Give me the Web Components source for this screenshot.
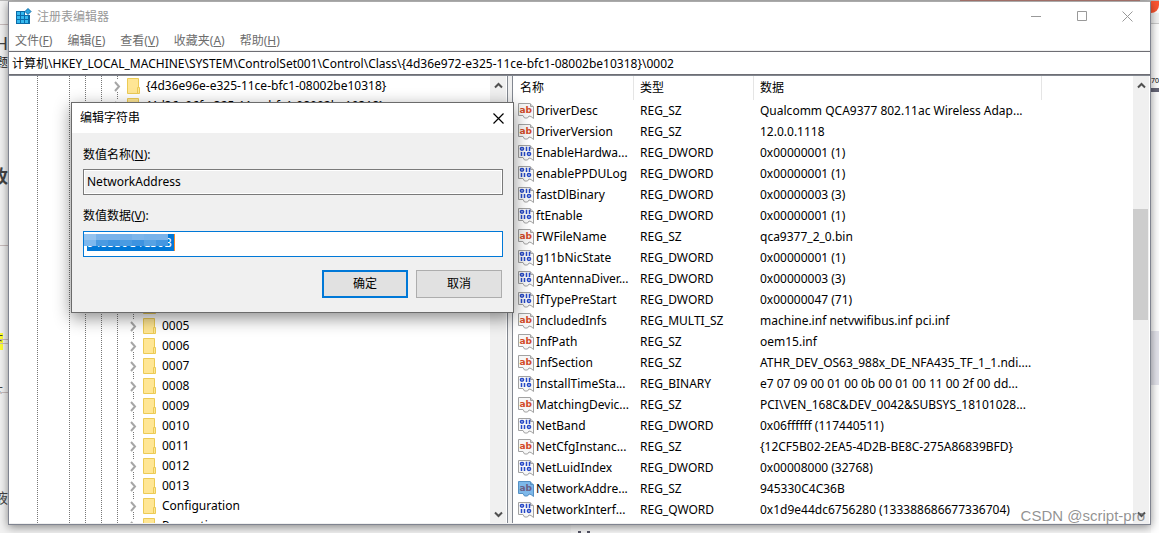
<!DOCTYPE html>
<html lang="zh-CN">
<head>
<meta charset="utf-8">
<title>注册表编辑器</title>
<style>
  body { margin: 0; font: 12px/20px "Noto Sans", "Noto Sans CJK SC", sans-serif; color: #000; }
</style>
</head>
<body>
<reg-desktop>
  <desk-backdrop slot="backdrop"></desk-backdrop>
  <reg-window caption="注册表编辑器">
    <menu-strip slot="menu"></menu-strip>
    <address-bar slot="address" path="计算机\HKEY_LOCAL_MACHINE\SYSTEM\ControlSet001\Control\Class\{4d36e972-e325-11ce-bfc1-08002be10318}\0002"></address-bar>
    <key-tree slot="tree"></key-tree>
    <value-list slot="values"></value-list>
  </reg-window>
  <string-dialog slot="dialog" caption="编辑字符串"></string-dialog>
  <span slot="mark">CSDN @script-pro</span>
</reg-desktop>

<script>
class Base extends HTMLElement {
  render(css, html) {
    this.attachShadow({ mode: "open" }).innerHTML =
      `<style>*{box-sizing:border-box}:host{box-sizing:border-box}button{font:inherit;color:inherit;padding:0;border:0;background:none}${css}</style>${html}`;
  }
}

customElements.define("reg-desktop", class extends Base {
  connectedCallback() {
    this.render(`
      :host { display: flex; flex-direction: column; position: relative; height: 100vh; overflow: hidden; background: #f2f2f2; }
      ::slotted(reg-window) { flex: 1; min-height: 0; margin: 1px 8px 8px; }
      ::slotted(string-dialog) { position: absolute; left: 71px; top: 102px; }
      ::slotted([slot=mark]) { position: absolute; right: 14px; bottom: 7px; font: 15px/20px "Liberation Sans", sans-serif; color: rgba(110,110,110,.75); }`,
      `<slot name="backdrop"></slot><slot></slot><slot name="dialog"></slot><slot name="mark"></slot>`);
  }
});

customElements.define("desk-backdrop", class extends Base {
  connectedCallback() {
    this.render(`
      :host { display: block; position: absolute; inset: 0; overflow: hidden; }
      :host > * { position: absolute; }
      .top { left: 0; right: 0; top: 0; height: 1px; background: linear-gradient(90deg,#bbb 0 960px,#b98078 960px 1140px,#bbb 1140px); }
      .left { left: 0; top: 0; bottom: 0; width: 8px; overflow: hidden; color: #444; }
      .left * { position: absolute; right: 0; white-space: nowrap; }
      .left i { left: 0; height: 1px; background: #c8bcbc; }
      .left .hot { left: 0; width: 3px; height: 17px; top: 333px; background: #ff3; }
      .right { right: 0; top: 0; bottom: 0; width: 8px; background: #fff; overflow: hidden; }
      .right * { position: absolute; left: 0; right: 0; }
      .bottom { left: 571px; right: 0; bottom: 0; height: 8px; background: #f8f8f8; }
      .dots { left: 578px; bottom: 0; width: 12px; height: 2px; background: linear-gradient(90deg,#556 3px,transparent 3px 9px,#556 9px); }`,
      `<div class="bottom"></div><div class="dots"></div>
       <div class="left">
         <span style="top:33px;font-size:18px">H</span>
         <span style="top:53px;color:#222">标题</span>
         <span style="top:166px;font-size:18px;font-weight:700">改</span>
         <span style="top:488px;font-size:14px">液</span>
         <b class="hot"></b>
         <span style="top:331px;right:5px">下</span><span style="top:383px;right:5px">下</span>
         <i style="top:24px"></i><i style="top:245px"></i><i style="top:339px"></i><i style="top:343px"></i><i style="top:392px"></i>
       </div>
       <div class="right">
         <b style="top:0;height:13px;background:#fc5531;border-radius:0 0 8px 0"></b>
         <b style="top:13px;height:11px;background:#f4f4f4;border-bottom:1px solid #ccc"></b>
         <b style="top:77px;height:6px;font:7px/7px 'Noto Sans'">704</b>
         <b style="top:88px;height:4px;background:#667"></b>
         <b style="top:331px;height:54px;background:#e4e4ec"></b>
       </div><div class="top"></div>`);
  }
});

customElements.define("reg-window", class extends Base {
  connectedCallback() {
    this.render(`
      :host { display: flex; flex-direction: column; position: relative; background: #f0f0f0; border: 1px solid #808490; border-top-color: #aaa; box-shadow: 0 2px 9px rgba(0,0,0,.45); }
      header { display: flex; align-items: center; height: 29px; padding-left: 6px; background: #fff; color: #999; flex: none; }
      h1 { margin: 0 auto 0 5px; font: inherit; }
      header button { width: 46px; height: 28px; display: grid; place-items: center; }
      header svg { display: block; }
      .panes { flex: 1; min-height: 0; display: grid; grid-template: minmax(0, 1fr) / 499px 1fr; column-gap: 4px; padding-bottom: 1px; border-top: 1px solid #828790; }
      ::slotted([slot=tree]), ::slotted([slot=values]) { min-height: 0; }`,
      `<header>
        <svg width="17" height="17" viewBox="0 0 17 17" aria-hidden="true">
          <path d="M1 3h9v4h5v9H1z" fill="#0a6ba8"/>
          <path d="M2 4h3v3H2zM6 4h3v3H6zM2 8h3v3H2zM6 8h3v3H6zM10 8h3v3h-3zM2 12h3v3H2zM6 12h3v3H6zM10 12h3v3h-3z" fill="#35b8ee"/>
          <path d="M13 .5 16 3.500 13 6.500 10 3.500z" fill="#2aa5e0" stroke="#0a6ba8"/>
        </svg>
        <h1>${this.getAttribute("caption")}</h1>
        <button aria-label="最小化"><svg width="11" height="11"><path d="M1 5.500h10" stroke="#999"/></svg></button>
        <button aria-label="最大化"><svg width="11" height="11"><path d="M1.500.5h9v9h-9z" fill="none" stroke="#999"/></svg></button>
        <button aria-label="关闭"><svg width="11" height="11"><path d="M.5.5l10 10M10.500.5l-10 10" stroke="#999"/></svg></button>
      </header>
      <slot name="menu"></slot><slot name="address"></slot>
      <div class="panes"><slot name="tree"></slot><slot name="values"></slot></div>`);
  }
});

customElements.define("menu-strip", class extends Base {
  connectedCallback() {
    const items = [["文件", "F"], ["编辑", "E"], ["查看", "V"], ["收藏夹", "A"], ["帮助", "H"]];
    this.render(`
      :host { display: flex; gap: 15px; height: 19px; padding-left: 6px; background: #fff; color: #6d6d6d; flex: none; }
      button { line-height: 19px; }`,
      items.map(([t, k]) => `<button>${t}(<u>${k}</u>)</button>`).join(""));
  }
});

customElements.define("address-bar", class extends Base {
  connectedCallback() {
    this.render(`
      :host { display: block; height: 24px; margin-top: 1px; background: #fff; border: solid #6e6e74; border-width: 1px 0; flex: none; }
      input { display: block; width: 100%; height: 22px; border: 0; padding: 0 3px; font: inherit; background: none; outline: 0; }`,
      `<input aria-label="地址">`);
    this.shadowRoot.querySelector("input").value = this.getAttribute("path");
  }
});

customElements.define("scroll-rail", class extends Base {
  connectedCallback() {
    const arrow = d => `<svg width="9" height="7" viewBox="0 0 9 7"><path d="${d}" fill="none" stroke="#505050" stroke-width="2"/></svg>`;
    this.render(`
      :host { display: flex; flex-direction: column; width: 16px; background: #f0f0f0; }
      button { height: 18px; display: grid; place-items: center; flex: none; }
      .track { flex: 1; position: relative; }
      .track i { position: absolute; left: 0; right: 1px; top: 28%; height: var(--thumb, 27%); background: #cdcdcd; }`,
      `<button aria-label="向上">${arrow("M1 5.500l3.500-3.500L8 5.500")}</button><div class="track"><i></i></div><button aria-label="向下">${arrow("M1 1.500l3.500 3.500L8 1.500")}</button>`);
  }
});

customElements.define("tree-item", class extends Base {
  connectedCallback() {
    this.render(`
      :host { display: flex; align-items: center; height: 20px; padding-left: 100px; }
      :host([level="2"]) { padding-left: 116px; }
      .twist { width: 16px; align-self: stretch; display: flex; align-items: center;
        background: repeating-linear-gradient(#777 0 1px,transparent 1px 2px) 8px 0/1px 100% no-repeat; }
      .twist svg { display: block; width: 16px; height: 12px; background: #fff; }
      .folder { margin: 0 6px 0 2px; flex: none; }
      span { white-space: nowrap; }`,
      `<div class="twist"><svg viewBox="0 0 16 12"><path d="M6 2l4 4.500L6 11" fill="none" stroke="#a6a6a6" stroke-width="2"/></svg></div>
       <svg class="folder" width="13" height="16" viewBox="0 0 13 16" aria-hidden="true">
         <path d="M.5.5h11V15.500H.5z" fill="#ffe694" stroke="#eccb55"/><path d="M10.500 9.500h2v6h-2z" fill="#ffe694" stroke="#eccb55"/></svg>
       <span><slot></slot></span>`);
  }
});

customElements.define("key-tree", class extends Base {
  connectedCallback() {
    const subs = ["0005", "0006", "0007", "0008", "0009", "0010", "0011", "0012", "0013", "Configuration", "Properties"];
    const line = x => `repeating-linear-gradient(#777 0 1px,transparent 1px 2px) ${x}px 0/1px 100% no-repeat`;
    this.render(`
      :host { display: flex; background: #fff; border-right: 1px solid #828790; overflow: hidden; --thumb: 20%; }
      .keys { flex: 1; min-width: 0; overflow: hidden; background: ${[28, 60, 76, 92].map(line).join(",")}; }
      .sub { background: ${line(108)}; }
      .covered { height: 180px; }
      scroll-rail { margin-right: 1px; }`,
      `<div class="keys" role="tree">
         <tree-item>{4d36e96e-e325-11ce-bfc1-08002be10318}</tree-item>
         <tree-item>{4d36e96f-e325-11ce-bfc1-08002be10318}</tree-item>
         <div class="sub"><div class="covered"></div><tree-item level="2">0004</tree-item>
         ${subs.map(s => `<tree-item level="2">${s}</tree-item>`).join("")}</div>
       </div><scroll-rail></scroll-rail>`);
  }
});

customElements.define("value-icon", class extends Base {
  connectedCallback() {
    const on = this.hasAttribute("selected");
    const edge = on ? "#5590c4" : "#a2a2a2";
    const glyph = this.getAttribute("kind") === "sz"
      ? `<text x="1.500" y="10" font-family="DejaVu Sans" font-weight="700" font-size="9" fill="${on ? "#6b5f86" : "#d24a28"}">ab</text>`
      : `<g fill="none" stroke="#2448c8" stroke-width="1.500"><ellipse cx="4" cy="3.800" rx="1.600" ry="1.400"/><path d="M8.500 1.700v4.200M11.500 1.700v4.200M3.500 6.900v4.200M6.500 6.900v4.200"/><ellipse cx="11" cy="9" rx="1.600" ry="1.400"/></g>`;
    this.render(`:host { display: block; } svg { display: block; }`,
      `<svg width="16" height="16" viewBox="0 0 16 16" aria-hidden="true"><path d="M.5.5H12L15.500 4V15.500L13 13.500 11 13 9.500 15H6.500L5 12.500H.5z" fill="${on ? "#7db8ea" : "#f7f7f7"}" stroke="${edge}"/><path d="M12.500 .5V3.500h3" fill="none" stroke="${edge}"/>${glyph}</svg>`);
  }
});

customElements.define("value-list", class extends Base {
  connectedCallback() {
    const rows = [
      ["DriverDesc", "REG_SZ", "Qualcomm QCA9377 802.11ac Wireless Adap..."],
      ["DriverVersion", "REG_SZ", "12.0.0.1118"],
      ["EnableHardwa...", "REG_DWORD", "0x00000001 (1)"],
      ["enablePPDULog", "REG_DWORD", "0x00000001 (1)"],
      ["fastDlBinary", "REG_DWORD", "0x00000003 (3)"],
      ["ftEnable", "REG_DWORD", "0x00000001 (1)"],
      ["FWFileName", "REG_SZ", "qca9377_2_0.bin"],
      ["g11bNicState", "REG_DWORD", "0x00000001 (1)"],
      ["gAntennaDiver...", "REG_DWORD", "0x00000003 (3)"],
      ["IfTypePreStart", "REG_DWORD", "0x00000047 (71)"],
      ["IncludedInfs", "REG_MULTI_SZ", "machine.inf netvwifibus.inf pci.inf"],
      ["InfPath", "REG_SZ", "oem15.inf"],
      ["InfSection", "REG_SZ", "ATHR_DEV_OS63_988x_DE_NFA435_TF_1_1.ndi...."],
      ["InstallTimeSta...", "REG_BINARY", "e7 07 09 00 01 00 0b 00 01 00 11 00 2f 00 dd..."],
      ["MatchingDevic...", "REG_SZ", "PCI\\VEN_168C&amp;DEV_0042&amp;SUBSYS_18101028..."],
      ["NetBand", "REG_DWORD", "0x06ffffff (117440511)"],
      ["NetCfgInstanc...", "REG_SZ", "{12CF5B02-2EA5-4D2B-BE8C-275A86839BFD}"],
      ["NetLuidIndex", "REG_DWORD", "0x00008000 (32768)"],
      ["NetworkAddre...", "REG_SZ", "945330C4C36B"],
      ["NetworkInterf...", "REG_QWORD", "0x1d9e44dc6756280 (133388686677336704)"],
      ["", "", ""]
    ];
    this.render(`
      :host { display: flex; background: #fff; border-left: 1px solid #828790; overflow: hidden; }
      .view { flex: 1; min-width: 0; overflow: hidden; }
      table { width: 100%; table-layout: fixed; border-collapse: separate; border-spacing: 0; }
      th { height: 24px; padding: 0 0 0 6px; text-align: left; font-weight: 400; border-right: 1px solid #e5e5e5; }
      th:first-child { padding-left: 7px; }
      th:last-child { border: 0; }
      td { height: 21px; padding: 0 0 0 6px; line-height: 21px; white-space: nowrap; }
      td:first-child { padding-left: 5px; }
      .name { display: flex; gap: 2px; align-items: center; height: 21px; }
      scroll-rail { margin-right: 1px; }`,
      `<div class="view"><table>
        <colgroup><col style="width:121px"><col style="width:120px"><col style="width:288px"><col></colgroup>
        <thead><tr><th>名称</th><th>类型</th><th>数据</th><th></th></tr></thead>
        <tbody>${rows.map(([n, t, d]) => `<tr><td><div class="name"><value-icon kind="${/_SZ|^$/.test(t) ? "sz" : "bin"}"${n === "NetworkAddre..." ? " selected" : ""}></value-icon>${n}</div></td><td>${t}</td><td>${d}</td><td></td></tr>`).join("")}</tbody>
      </table></div><scroll-rail></scroll-rail>`);
  }
});

customElements.define("string-dialog", class extends Base {
  connectedCallback() {
    this.render(`
      :host { display: block; width: 443px; background: #f0f0f0; border: 1px solid #6b6b6b; box-shadow: 0 5px 16px rgba(0,0,0,.45); }
      header { display: flex; justify-content: space-between; align-items: center; height: 30px; padding-left: 8px; background: #fff; }
      h2 { margin: 0; font: inherit; }
      header button { width: 30px; height: 30px; display: grid; place-items: center; }
      form { display: flex; flex-direction: column; padding: 12px 10px 14px 11px; }
      label { height: 20px; margin-bottom: 4px; }
      .field { position: relative; height: 26px; border: 1px solid #7a7a7a; background: #fff; }
      .field + label { margin-top: 11px; margin-bottom: 5px; }
      input { display: block; width: 100%; height: 24px; border: 1px solid #fff; padding: 0 2px 2px; font: inherit; background: #f0f0f0; outline: 0; }
      .edit { border-color: #0078d7; }
      .edit input { padding-bottom: 4px; color: #fff; background: linear-gradient(90deg,#0078d7 87px,#f7872b 87px) 2px 1px/88px 17px no-repeat #fff; }
      .mosaic { position: absolute; left: 0; top: 2px; width: 84px; height: 12px; display: grid; grid-template: 6px 6px / repeat(7, 1fr); }
      .actions { display: flex; justify-content: flex-end; gap: 8px; margin: 13px 1px 0 0; }
      .actions button { width: 86px; height: 28px; background: #e1e1e1; border: 1px solid #adadad; }
      .actions .ok { border: 2px solid #0078d7; }`,
      `<header><h2>${this.getAttribute("caption")}</h2><button aria-label="关闭"><svg width="11" height="11"><path d="M.5.5l10 10M10.500.5l-10 10" stroke="#000" stroke-width="1.200"/></svg></button></header>
      <form onsubmit="return false">
        <label for="n">数值名称(<u>N</u>):</label>
        <div class="field"><input id="n" value="NetworkAddress" readonly></div>
        <label for="v">数值数据(<u>V</u>):</label>
        <div class="field edit"><input id="v" value="945330C4C36B"><div class="mosaic">${
          ["#94c3ef", "#7ab3ea", "#7ab3ea", "#74b0e9", "#7db6eb", "#78b3ea", "#7ab3ea", "#7db8ee", "#4a9be2", "#3d93e0", "#4a9be2", "#3d93e0", "#56a2e4", "#4497e1"]
            .map(c => `<i style="background:${c}"></i>`).join("")}</div></div>
        <div class="actions"><button class="ok">确定</button><button type="button">取消</button></div>
      </form>`);
  }
});
</script>
</body>
</html>
